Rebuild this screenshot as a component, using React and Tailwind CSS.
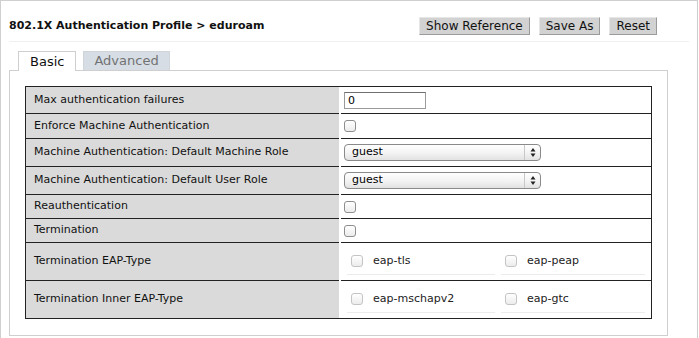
const ROWS = [
  { label: 'Max authentication failures', h: 'h-[27px]', kind: 'input' },
  { label: 'Enforce Machine Authentication', h: 'h-[25px]', kind: 'check' },
  { label: 'Machine Authentication: Default Machine Role', h: 'h-[28px]', kind: 'select' },
  { label: 'Machine Authentication: Default User Role', h: 'h-[28px]', kind: 'select' },
  { label: 'Reauthentication', h: 'h-[24px]', kind: 'check' },
  { label: 'Termination', h: 'h-[24px]', kind: 'check' },
  { label: 'Termination EAP-Type', h: 'h-[38px]', kind: 'multi', opts: ['eap-tls', 'eap-peap'] },
  { label: 'Termination Inner EAP-Type', h: 'h-[37px]', kind: 'multi', opts: ['eap-mschapv2', 'eap-gtc'] },
];

function Checkbox({ faint }) {
  return (
    <span
      className={
        'inline-block w-[12px] h-[12px] rounded-[3px] border bg-gradient-to-b from-white to-[#ececec] ' +
        (faint ? 'border-[#c4c4c4]' : 'border-[#8e8e8e]')
      }
    />
  );
}

function Select() {
  return (
    <div className="flex items-center w-[197px] h-[17px] rounded-[4px] border border-[#8a8a8a] bg-gradient-to-b from-white via-[#f4f4f4] to-[#e2e2e2] text-[11px] text-black">
      <span className="flex-1 pl-[7px]">guest</span>
      <span className="flex flex-col items-center justify-center w-[16px] h-full border-l border-[#c8c8c8] leading-none">
        <svg width="6" height="11" viewBox="0 0 6 11">
          <path d="M3 1 L5.5 4.5 H0.5 Z" fill="#222" />
          <path d="M3 10 L5.5 6.5 H0.5 Z" fill="#222" />
        </svg>
      </span>
    </div>
  );
}

function Value({ row }) {
  if (row.kind === 'input') {
    return (
      <div className="w-[82px] h-[17px] border border-[#9a9a9a] border-t-[#6f6f6f] bg-white pl-[3px] text-[11px] leading-[15px] text-black">
        0
      </div>
    );
  }
  if (row.kind === 'check') return <Checkbox />;
  if (row.kind === 'select') return <Select />;
  return (
    <div className="flex w-full pl-[3px] pr-[6px]">
      {row.opts.map((o, i) => (
        <div
          key={o}
          className={
            'flex items-center h-[26px] border-b border-[#ececec] pl-[4px] ' +
            (i === 0 ? 'w-[148px] mr-[6px]' : 'flex-1')
          }
        >
          <Checkbox faint />
          <span className="ml-[10px] text-[11px] text-[#222]">{o}</span>
        </div>
      ))}
    </div>
  );
}

function Btn({ children }) {
  return (
    <button className="h-[18px] px-[6px] bg-[#d2d2d2] border border-[#e6e6e6] border-b-[#9a9a9a] border-r-[#9a9a9a] text-[12px] leading-[15px] text-[#111]">
      {children}
    </button>
  );
}

export default function App() {
  return (
    <div
      className="w-[698px] h-[338px] overflow-hidden bg-white border-l border-t border-r border-[#cfcfcf]"
      style={{ fontFamily: '"DejaVu Sans", Verdana, sans-serif' }}
    >
      {/* header */}
      <div className="flex items-center justify-between h-[41px] pt-[10px] mx-[8px] border-b border-[#f0f0f0]">
        <h1 className="text-[11px] font-bold text-[#111]">
          802.1X Authentication Profile &gt; eduroam
        </h1>
        <div className="flex gap-[9px] mr-[32px]">
          <Btn>Show Reference</Btn>
          <Btn>Save As</Btn>
          <Btn>Reset</Btn>
        </div>
      </div>

      {/* tabs */}
      <div className="flex items-end gap-[7px] ml-[17px] mt-[8px] h-[20px]">
        <div className="h-[20px] px-[11px] bg-white border border-b-0 border-[#cfcfcf] text-[13px] leading-[19px] text-[#111] relative top-[1px] z-10">
          Basic
        </div>
        <div className="h-[19px] px-[10px] bg-[#d6dde5] border border-b-0 border-[#d0d5da] text-[13px] leading-[18px] text-[#727272]">
          Advanced
        </div>
      </div>

      {/* panel */}
      <div className="ml-[8px] w-[659px] h-[266px] border border-[#cfcfcf] p-[15px]">
        <div className="border border-[#222]">
          {ROWS.map((row, i) => {
            const last = i === ROWS.length - 1;
            return (
              <div key={row.label} className={'flex gap-[2px] ' + row.h}>
                <div
                  className={
                    'w-[313px] flex items-center pl-[8px] bg-[#dadada] text-[11px] text-[#111] ' +
                    (last ? '' : 'border-b border-[#222]')
                  }
                >
                  {row.label}
                </div>
                <div className={'flex-1 flex items-center pl-[3px] ' + (last ? '' : 'border-b border-[#222]')}>
                  <Value row={row} />
                </div>
              </div>
            );
          })}
        </div>
      </div>
    </div>
  );
}
